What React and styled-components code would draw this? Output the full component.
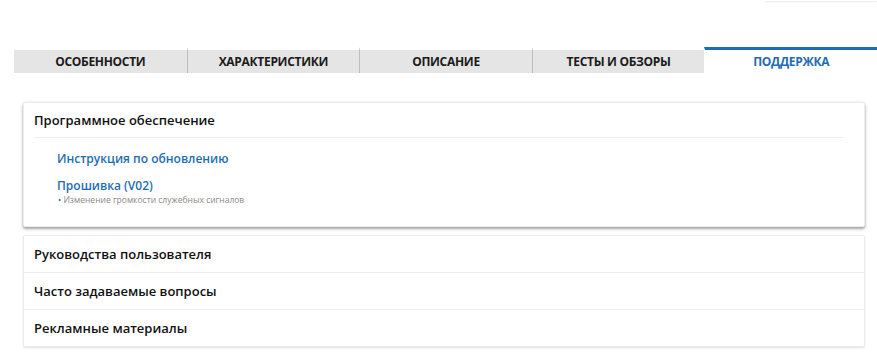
import React from "react";
import styled, { createGlobalStyle } from "styled-components";

const tabs = ["Особенности", "Характеристики", "Описание", "Тесты и обзоры", "Поддержка"];
const active = 4;

const others = ["Руководства пользователя", "Часто задаваемые вопросы", "Рекламные материалы"];

const App = () => {
  return (
    <Page>
      <GlobalStyle />
      <TopStrip>
        <Corner />
      </TopStrip>
      <Tabs>
        {tabs.map((t, i) => (
          <Tab key={t} $active={i === active}>
            {t}
          </Tab>
        ))}
      </Tabs>
      <Content>
        <Card $open>
          <CardHeader>Программное обеспечение</CardHeader>
          <CardBody>
            <Link>Инструкция по обновлению</Link>
            <Item>
              <Link>Прошивка (V02)</Link>
              <Note>
                <Dot>•</Dot> Изменение громкости служебных сигналов
              </Note>
            </Item>
          </CardBody>
        </Card>
        <Card>
          {others.map((o) => (
            <Row key={o}>{o}</Row>
          ))}
        </Card>
      </Content>
    </Page>
  );
};

export default App;

const GlobalStyle = createGlobalStyle`
  body {
    margin: 0;
    background: #fff;
    font-family: "Open Sans", "Noto Sans", sans-serif;
  }
`;

const Page = styled.div`
  width: 877px;
  height: 360px;
  overflow: hidden;
  background: #fff;
`;

const TopStrip = styled.div`
  height: 47px;
  display: flex;
  justify-content: flex-end;
  align-items: flex-start;
`;

const Corner = styled.div`
  width: 112px;
  height: 1px;
  box-shadow: 0 1px 2px rgba(0, 0, 0, 0.12);
`;

const Tabs = styled.div`
  display: grid;
  grid-template-columns: repeat(5, 1fr);
  margin-left: 14px;
  width: 863px;
  height: 26px;
`;

const Tab = styled.div`
  display: flex;
  align-items: center;
  justify-content: center;
  box-sizing: border-box;
  font-size: 12px;
  font-weight: 700;
  text-transform: uppercase;
  letter-spacing: -0.3px;
  color: ${({ $active }) => ($active ? "#1e6db4" : "#1a1a1a")};
  background: ${({ $active }) => ($active ? "#fff" : "#e5e5e5")};
  border-top: 3px solid ${({ $active }) => ($active ? "#1e6db4" : "#fff")};
  border-left: 1px solid ${({ $active }) => ($active ? "transparent" : "#bdbdbd")};
  &:first-child {
    border-left: none;
  }
  padding-bottom: 1px;
`;

const Content = styled.div`
  display: flex;
  flex-direction: column;
  gap: 8px;
  margin: 29px 12px 0 23px;
`;

const Card = styled.div`
  background: #fff;
  border: 1px solid #ececec;
  border-radius: 2px;
  box-shadow: ${({ $open }) =>
    $open ? "0 2px 3px rgba(0, 0, 0, 0.35), 0 0 3px rgba(0, 0, 0, 0.08)" : "0 1px 2px rgba(0, 0, 0, 0.12)"};
`;

const CardHeader = styled.div`
  margin: 0 21px 0 10px;
  height: 34px;
  display: flex;
  align-items: center;
  font-size: 13px;
  font-weight: 600;
  color: #111;
  border-bottom: 1px solid #eeeeee;
`;

const CardBody = styled.div`
  padding: 12px 0 21px 33px;
  display: flex;
  flex-direction: column;
  gap: 9px;
`;

const Item = styled.div`
  display: flex;
  flex-direction: column;
`;

const Link = styled.a`
  font-size: 12px;
  font-weight: 600;
  color: #1e6db4;
  line-height: 18px;
  cursor: pointer;
`;

const Note = styled.div`
  font-size: 8.5px;
  color: #8a8a8a;
  line-height: 10px;
  padding-left: 1px;
`;

const Dot = styled.span`
  color: #1e6db4;
`;

const Row = styled.div`
  height: 36px;
  padding-left: 10px;
  display: flex;
  align-items: center;
  font-size: 13px;
  font-weight: 600;
  color: #111;
  & + & {
    border-top: 1px solid #eeeeee;
  }
`;
